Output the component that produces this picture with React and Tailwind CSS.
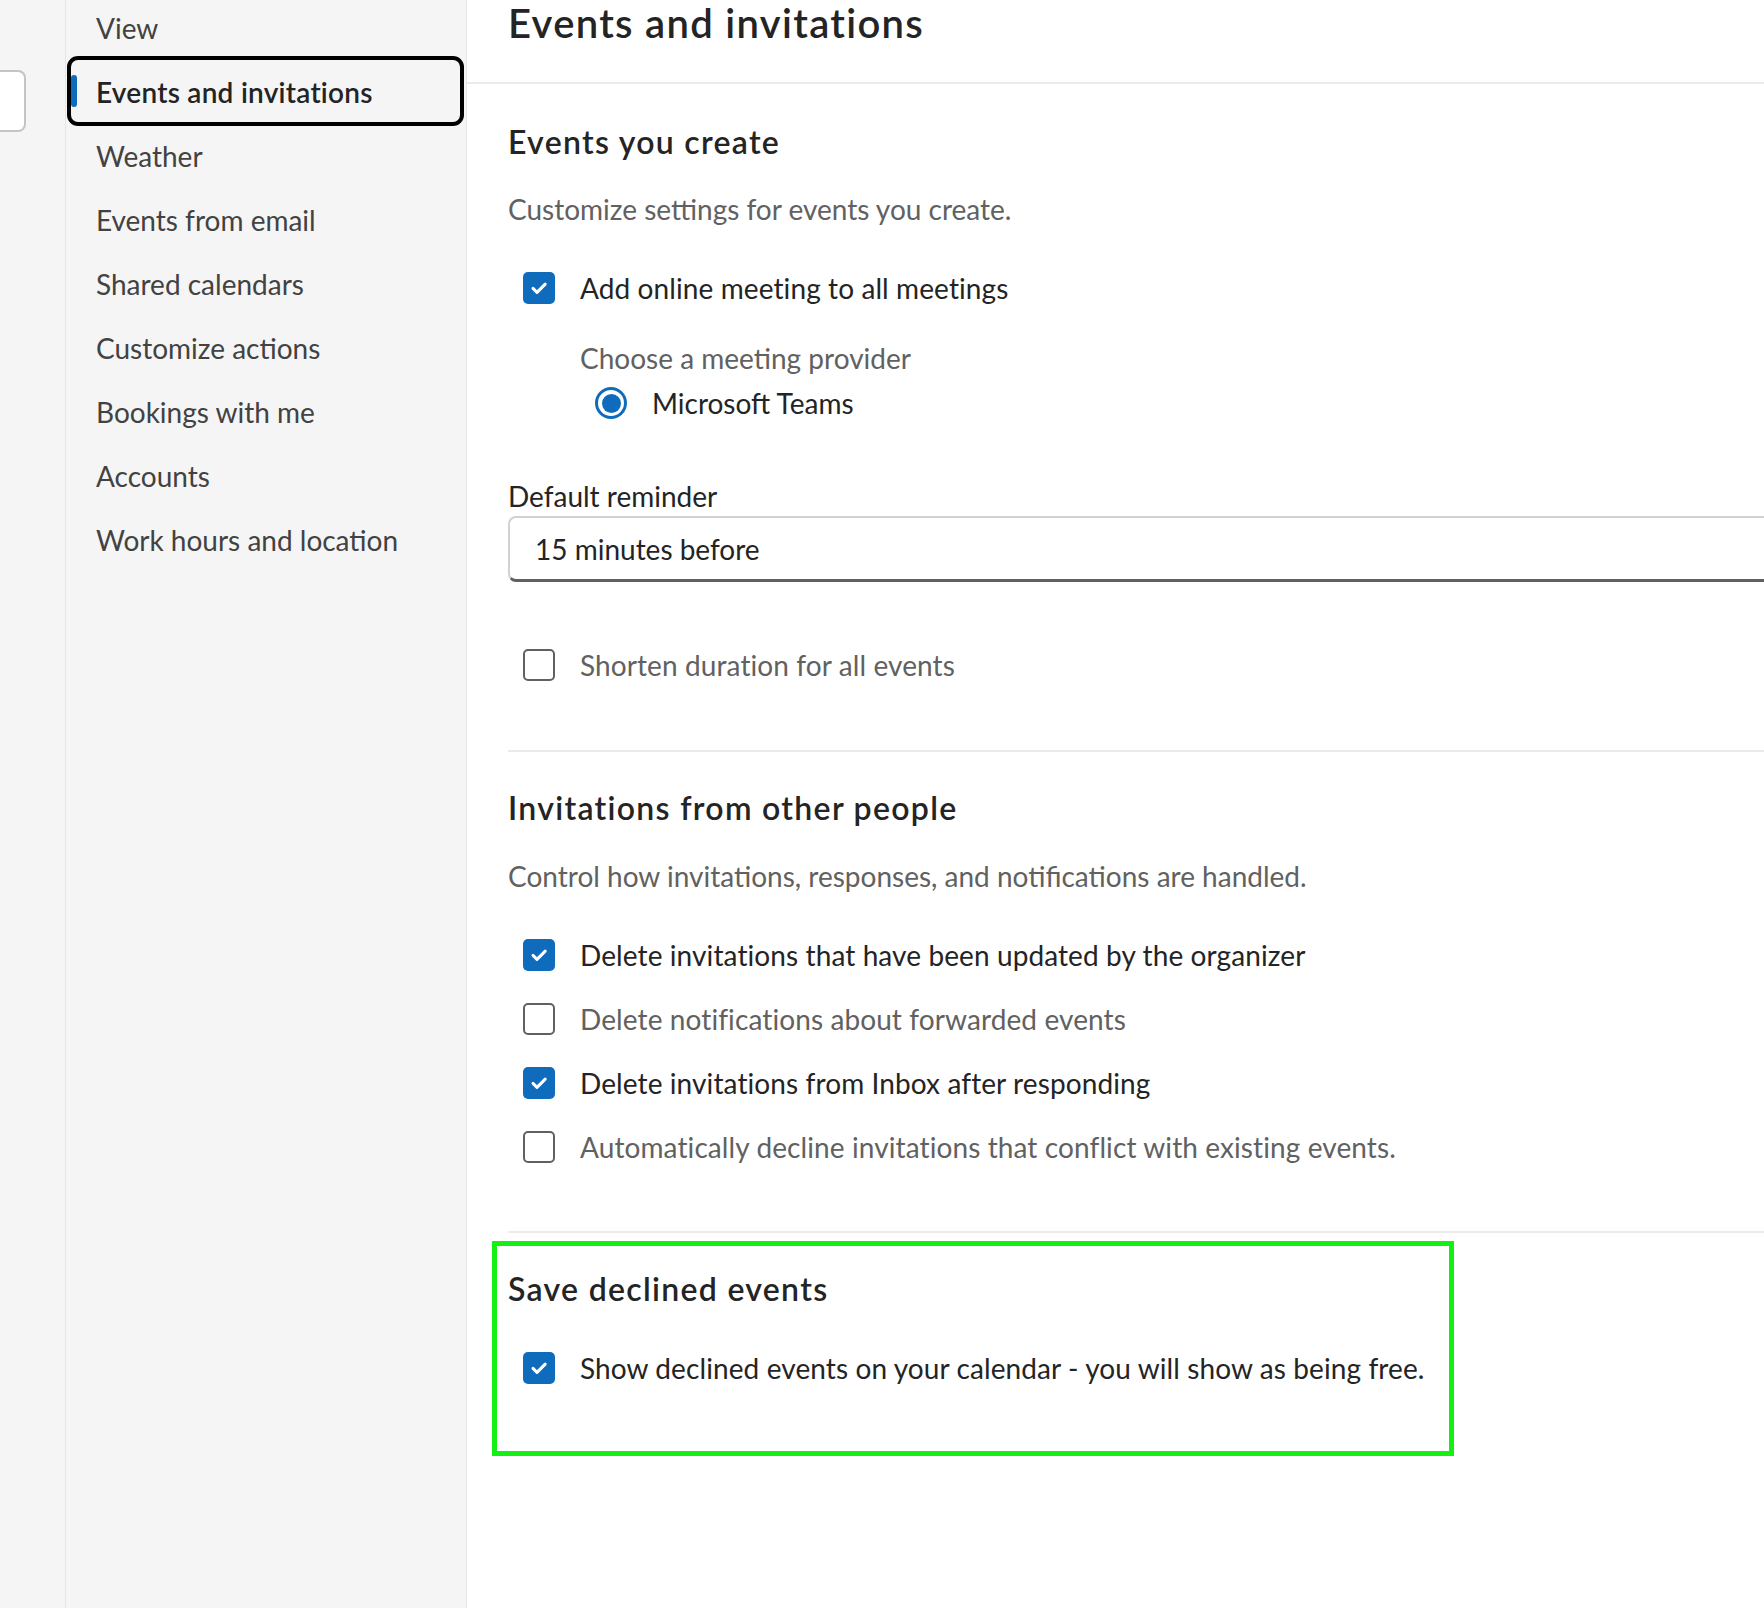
import React from "react";

const navItems = [
    "View",
    "Events and invitations",
    "Weather",
    "Events from email",
    "Shared calendars",
    "Customize actions",
    "Bookings with me",
    "Accounts",
    "Work hours and location",
];

function Check({ checked }) {
    if (checked) {
        return (
            <span className="flex h-[32px] w-[32px] shrink-0 items-center justify-center rounded-[5px] bg-[#0f6cbd]">
                <svg width="32" height="32" viewBox="0 0 32 32" fill="none">
                    <path
                        d="M10 16.4l4 4 8.2-8.3"
                        stroke="white"
                        strokeWidth="3"
                        strokeLinecap="round"
                        strokeLinejoin="round"
                    />
                </svg>
            </span>
        );
    }
    return <span className="h-[32px] w-[32px] shrink-0 rounded-[5px] border-2 border-[#616161] bg-white" />;
}

function CheckRow({ checked, label, className = "" }) {
    return (
        <div className={"flex h-[32px] items-center pl-[15px] " + className}>
            <Check checked={checked} />
            <span
                className={
                    "ml-[25px] whitespace-nowrap text-[28px] leading-[36px] tracking-[0.1px] " +
                    (checked ? "text-[#242424]" : "text-[#616161]")
                }
            >
                {label}
            </span>
        </div>
    );
}

function SectionTitle({ children, className = "" }) {
    return (
        <h2 className={"text-[32px] font-semibold leading-[40px] tracking-[1.3px] text-[#242424] " + className}>
            {children}
        </h2>
    );
}

export default function App() {
    return (
        <div className="flex h-[1608px] w-[1764px] overflow-hidden bg-white font-['Segoe_UI','Lato',sans-serif] text-[#242424]">
            {/* strip at far left */}
            <div className="w-[66px] shrink-0 border-r border-[#e6e6e6] bg-[#f5f5f5]">
                <div className="mt-[70px] h-[62px] w-[26px] rounded-r-[8px] border-2 border-l-0 border-[#c4c4c4] bg-white" />
            </div>

            {/* settings nav */}
            <nav className="w-[401px] shrink-0 border-r border-[#e6e6e6] bg-[#f5f5f5]">
                <ul className="-mt-[4px]">
                    {navItems.map((item, i) => {
                        const selected = i === 1;
                        return (
                            <li key={item} className="relative flex h-[64px] items-center pl-[30px]">
                                {selected ? (
                                    <>
                                        <span className="absolute -top-[4px] -bottom-[2px] left-[1px] right-[2px] rounded-[11px] border-4 border-black" />
                                        <span className="absolute left-[5px] top-[15px] h-[32px] w-[6px] rounded-full bg-[#0f6cbd]" />
                                    </>
                                ) : null}
                                <span
                                    className={
                                        "text-[28px] leading-[36px] " +
                                        (selected
                                            ? "font-semibold tracking-[0.25px] text-[#242424]"
                                            : "text-[#424242]")
                                    }
                                >
                                    {item}
                                </span>
                            </li>
                        );
                    })}
                </ul>
            </nav>

            {/* content */}
            <main className="min-w-0 flex-1 overflow-hidden">
                <header className="h-[84px] border-b-2 border-[#ebebeb] pl-[41px]">
                    <h1 className="text-[40px] font-semibold leading-[46px] tracking-[1.3px] text-[#242424]">
                        Events and invitations
                    </h1>
                </header>

                <div className="pl-[41px]">
                    {/* Events you create */}
                    <section>
                        <SectionTitle className="mt-[38px]">Events you create</SectionTitle>
                        <p className="mt-[29px] text-[28px] leading-[36px] text-[#616161]">
                            Customize settings for events you create.
                        </p>
                        <CheckRow checked className="mt-[45px]" label="Add online meeting to all meetings" />

                        <div className="mt-[36px] pl-[72px] text-[28px] leading-[36px] text-[#616161]">
                            Choose a meeting provider
                        </div>
                        <div className="mt-[11px] flex h-[32px] items-center pl-[87px]">
                            <span className="flex h-[32px] w-[32px] items-center justify-center rounded-full border-[3px] border-[#0f6cbd]">
                                <span className="h-[19px] w-[19px] rounded-full bg-[#0f6cbd]" />
                            </span>
                            <span className="ml-[25px] text-[28px] leading-[36px] text-[#242424]">
                                Microsoft Teams
                            </span>
                        </div>

                        <div className="mt-[59px] text-[28px] leading-[36px] text-[#242424]">Default reminder</div>
                        <div className="mt-[2px] flex h-[66px] w-[1320px] items-center rounded-[8px] border-2 border-b-[3px] border-[#d1d1d1] border-b-[#616161] pl-[25px]">
                            <span className="text-[28px] leading-[36px] text-[#242424]">15 minutes before</span>
                        </div>

                        <CheckRow checked={false} className="mt-[67px]" label="Shorten duration for all events" />
                    </section>

                    <div className="mt-[69px] h-[2px] bg-[#ebebeb]" />

                    {/* Invitations from other people */}
                    <section>
                        <SectionTitle className="mt-[36px]">Invitations from other people</SectionTitle>
                        <p className="mt-[30px] text-[28px] leading-[36px] text-[#616161]">
                            Control how invitations, responses, and notifications are handled.
                        </p>
                        <div className="mt-[45px] flex flex-col gap-[32px]">
                            <CheckRow checked label="Delete invitations that have been updated by the organizer" />
                            <CheckRow checked={false} label="Delete notifications about forwarded events" />
                            <CheckRow checked label="Delete invitations from Inbox after responding" />
                            <CheckRow
                                checked={false}
                                label="Automatically decline invitations that conflict with existing events."
                            />
                        </div>
                    </section>

                    <div className="mt-[68px] h-[2px] bg-[#ebebeb]" />

                    {/* Save declined events, outlined in green */}
                    <section className="relative">
                        <div className="pointer-events-none absolute left-[-16px] top-[8px] h-[215px] w-[962px] border-[5px] border-[#14f014]" />
                        <SectionTitle className="pt-[36px]">Save declined events</SectionTitle>
                        <CheckRow
                            checked
                            className="mt-[43px]"
                            label="Show declined events on your calendar - you will show as being free."
                        />
                    </section>
                </div>
            </main>
        </div>
    );
}
